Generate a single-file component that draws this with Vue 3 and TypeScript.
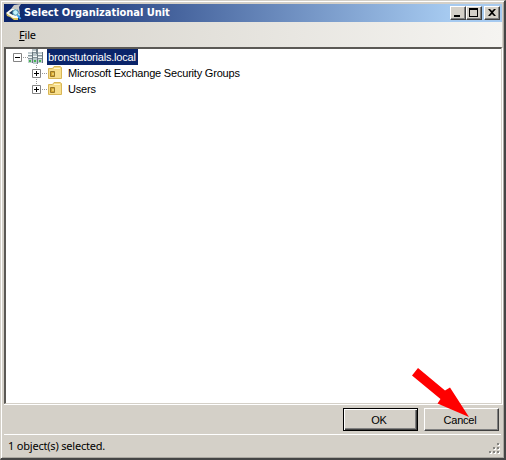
<script setup lang="ts">
import { ref } from 'vue'

interface Unit {
  name: string
}

const units: Unit[] = [
  { name: 'Microsoft Exchange Security Groups' },
  { name: 'Users' },
]
const selected = ref<number>(1)
</script>

<template>
  <div class="window">
    <header class="title-bar">
      <svg class="app-icon" width="18" height="18" viewBox="0 0 18 18">
        <path d="M5 5 8 1l7-1-2 3 1 7-3-5z" fill="#c9c9c6" />
        <path d="M0 9 5 5l6 0 3 6-2 3-6 0z" fill="#fbfbf2" />
        <path d="M0 9l4 3 3 2 5 0v2H8l-4-3-3-1z" fill="#dfca5e" />
        <path d="M3 9l4-3v5z" fill="#17345e" />
        <circle cx="9.5" cy="8.5" r="2.8" fill="#c5f4fc" stroke="#3a87a8" />
        <path d="M11.5 11l3 4" stroke="#38a6f4" stroke-width="2" />
      </svg>
      <h1>Select Organizational Unit</h1>
      <div class="controls">
        <button class="control" aria-label="Minimize">
          <svg width="14" height="12"><path d="M3 8h6v2H3z" /></svg>
        </button>
        <button class="control" aria-label="Maximize">
          <svg width="14" height="12"><path d="M2 1h9v9H2zM3 3v6h7V3z" fill-rule="evenodd" /></svg>
        </button>
        <button class="control close" aria-label="Close">
          <svg width="14" height="12"><path d="M3 2h2l2 2 2-2h2L8 5.5 11 9H9L7 7 5 9H3l3-3.5z" /></svg>
        </button>
      </div>
    </header>

    <nav class="menu"><span><u>F</u>ile</span></nav>

    <main class="tree">
      <div class="row root">
        <svg width="38" height="16" viewBox="0 0 38 16">
          <path d="M4.5 4.5h8v8h-8z" fill="#fff" stroke="#848484" />
          <path d="M6 8.5h5" stroke="#000" />
          <path d="M14 8.5h5" stroke="#999" stroke-dasharray="1 1" />
          <path d="M23 0h5v10h-5z" fill="#b9c5c9" />
          <path d="M27 0h2v10h-2z" fill="#73828a" />
          <path d="M19 3h4v11h-4z" fill="#c2ced2" />
          <path d="M23 3h1v11h-1z" fill="#66757d" />
          <path d="M29 3h4v11h-4z" fill="#c2ced2" />
          <path d="M33 3h1v11h-1z" fill="#66757d" />
          <path d="M24 5h4v10h-4z" fill="#b9c8cc" />
          <path d="M28 5h1v10h-1z" fill="#6c7b82" />
          <path d="M19 5.5h4M19 8.5h4M29 5.5h4M29 8.5h4M24 2.5h3M24 7.5h4" stroke="#f6fafa" />
          <path d="M19 6.5h4M19 9.5h4M29 6.5h4M29 9.5h4M24 3.5h3M24 8.5h4" stroke="#84949b" />
          <path d="M20 11h2v2h-2zM30 11h2v2h-2zM25 11h2v2h-2z" fill="#45b751" />
        </svg>
        <span class="label selected">bronstutorials.local</span>
      </div>
      <div v-for="(unit, index) in units" :key="unit.name" class="row child">
        <svg width="39" height="16" viewBox="0 0 39 16">
          <path :d="index === 0 ? 'M8.5 0v16' : 'M8.5 0v4'" stroke="#999" stroke-dasharray="1 1" />
          <path d="M4.5 4.5h8v8h-8z" fill="#fff" stroke="#848484" />
          <path d="M6 8.5h5M8.5 6v5" stroke="#000" />
          <path d="M14 8.5h5" stroke="#999" stroke-dasharray="1 1" />
          <path d="M20.5 3.5h4l1.5-2h6l1.5 1v11h-13z" fill="#f5da83" stroke="#d8b656" />
          <path d="M26 3.5h6" stroke="#fff5c8" />
          <path d="M21 5h12v8H21z" fill="#f8df8e" />
          <path d="M22.5 6.5h4v5h-4z" fill="#d4a72f" stroke="#9b7827" />
          <path d="M24 9h2" stroke="#fff0a6" />
        </svg>
        <span class="label">{{ unit.name }}</span>
      </div>
    </main>

    <footer class="actions">
      <button class="action primary">OK</button>
      <button class="action"><span>Cancel</span></button>
    </footer>
    <div class="status">
      <span>{{ selected }} object(s) selected.</span>
      <svg class="grip" width="12" height="12" viewBox="0 0 12 12">
        <path d="M9 1h2v2H9zM5 5h2v2H5zM9 5h2v2H9zM1 9h2v2H1zM5 9h2v2H5zM9 9h2v2H9z" fill="#fff" />
        <path d="M8 0h2v2H8zM4 4h2v2H4zM8 4h2v2H8zM0 8h2v2H0zM4 8h2v2H4zM8 8h2v2H8z" fill="#858480" />
      </svg>
    </div>
    <svg class="arrow" width="60" height="52" viewBox="0 0 60 52">
      <path d="M6 0 33 22.5 38 19.5 57 49 25.5 35.5 28.5 31 0 7.5z" fill="#f00" />
    </svg>
  </div>
</template>

<style>
body { margin: 0; }
</style>
<style scoped>
* { box-sizing: border-box; }
.window {
  position: relative;
  width: 506px;
  height: 460px;
  display: flex;
  flex-direction: column;
  padding: 3px 2px 0 2px;
  background: #d4d0c8;
  border: solid;
  border-width: 1px 2px 2px 1px;
  border-color: #d4d0c8 #454545 #454545 #d4d0c8;
  box-shadow: inset 1px 1px #fff, inset -1px -1px #aaa7a0;
  font: 11px/16px "Liberation Sans", Arial, sans-serif;
  letter-spacing: -.2px;
  color: #000;
}
.title-bar {
  height: 18px;
  flex: none;
  display: flex;
  align-items: center;
  margin: 0 0 0 1px;
  padding: 0 2px;
  background: linear-gradient(90deg, #0a246a, #a6caf0 445px);
}
h1 {
  margin: 0;
  color: #fff;
  font: bold 11px/18px "DejaVu Sans Condensed", "DejaVu Sans", sans-serif;
  font-stretch: condensed;
  letter-spacing: -.03px;
  white-space: nowrap;
}
.controls { display: flex; margin-left: auto; }
button { font: inherit; letter-spacing: inherit; color: inherit; background: #d4d0c8; border-radius: 0; padding: 0; }
.control {
  width: 16px;
  height: 14px;
  border: 1px solid;
  border-color: #fff #404040 #404040 #fff;
  box-shadow: inset -1px -1px #808080;
}
.control svg { display: block; }
.close { margin-left: 2px; }
.menu {
  height: 25px;
  flex: none;
  padding: 5px 16px;
  background: linear-gradient(90deg, #d6d3cb, #f5f4f1);
  font: 11px/16px "Noto Sans", sans-serif;
}
.tree {
  height: 357px;
  flex: none;
  margin: 0 0 0 1px;
  padding: 0 3px;
  background: #fff;
  border: solid;
  border-width: 2px 1px 1px 2px;
  border-color: #5b5955 #d4d0c8 #d4d0c8 #5b5955;
  box-shadow: 0 1px #fff, 1px 1px #fff;
}
.row { display: flex; height: 16px; white-space: nowrap; }
.child { padding-left: 19px; }
.label { padding: 0 2px 0 1px; }
.selected { background: #0a246a; color: #fff; }
.actions {
  height: 30px;
  flex: none;
  display: flex;
  justify-content: flex-end;
  gap: 6px;
  padding: 4px 3px 2px;
}
.action {
  width: 75px;
  height: 23px;
  border: 1px solid;
  border-color: #fff #404040 #404040 #fff;
  box-shadow: inset -1px -1px #808080;
  padding-right: 3px;
}
.primary { border-color: #000; box-shadow: inset 1px 1px #fff, inset -1px -1px #404040, inset -2px -2px #808080; }
.status {
  flex: 1;
  display: flex;
  justify-content: space-between;
  margin: 0 1px;
  padding: 3px 0 0 4px;
  border-top: 1px solid #fff;
  font: 11px/16px "Noto Sans", sans-serif;
}
.grip { margin-top: 5px; }
.arrow { position: absolute; left: 411px; top: 367px; }
</style>
